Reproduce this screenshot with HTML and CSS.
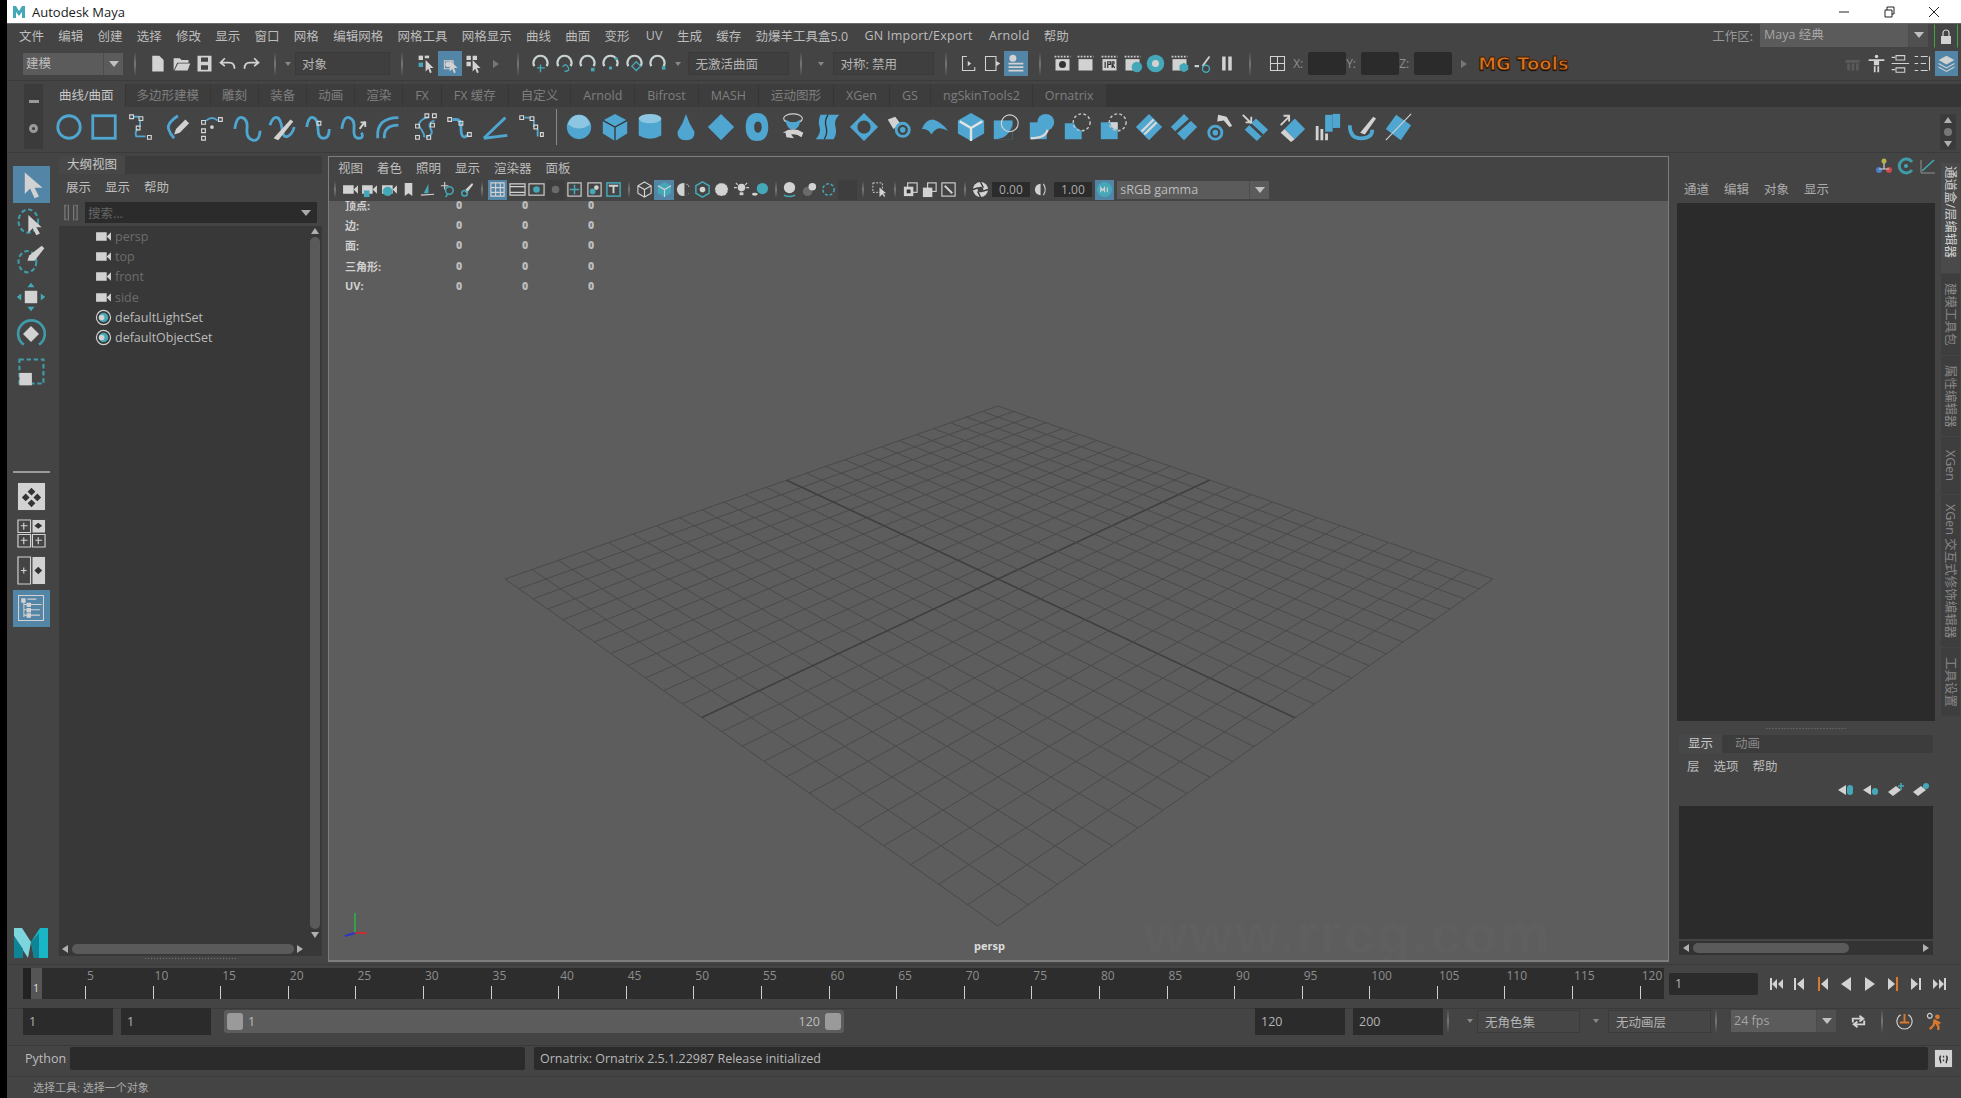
FILE: index.html
```html
<!DOCTYPE html>
<html lang="zh">
<head>
    <meta charset="UTF-8">
    <title>Autodesk Maya</title>
    <link rel="stylesheet" href="styles.css">
</head>
<body>
<svg class="defs">
    <symbol id="cam" viewBox="0 0 16 12"><rect class="fw" x="1" y="2" width="10" height="8"/><path class="fw" d="M11 6l4-4v8z"/></symbol>
    <symbol id="set" viewBox="0 0 18 18"><circle class="sw" cx="9" cy="9" r="7.5"/><circle class="ft" cx="9" cy="9" r="5"/><circle class="fw" cx="7" cy="9" r="3"/></symbol>
    <symbol id="cursor" viewBox="0 0 24 24"><path class="fw" d="M11 8v13l3-3 2 5 2-1-2-5h4z"/></symbol>
</svg>
<div class="app">
    <!-- title bar -->
    <div class="titlebar">
        <svg class="title-logo" viewBox="0 0 14 14"><path class="ft" d="M1 1h3l3 5 3-5h3v12h-3V7l-3 4-3-4v6H1z"/></svg>
        <span>Autodesk Maya</span>
        <div class="win-btns">
            <svg viewBox="0 0 12 12"><path class="sk" d="M1 6h10"/></svg>
            <svg viewBox="0 0 12 12"><path class="sk" d="M2 4h7v7H2zM4 4V1h7v7H9"/></svg>
            <svg viewBox="0 0 12 12"><path class="sk" d="M1 1l10 10M11 1L1 11"/></svg>
        </div>
    </div>

    <!-- main menu -->
    <div class="menubar">
        <span>文件</span><span>编辑</span><span>创建</span><span>选择</span><span>修改</span><span>显示</span><span>窗口</span><span>网格</span><span>编辑网格</span><span>网格工具</span><span>网格显示</span><span>曲线</span><span>曲面</span><span>变形</span><span class="lat">UV</span><span>生成</span><span>缓存</span><span>劲爆羊工具盒5.0</span><span class="lat">GN Import/Export</span><span class="lat">Arnold</span><span>帮助</span>
        <div class="workspace">
            <span>工作区:</span>
            <div class="dd dd-work"><span class="dd-text">Maya 经典</span><span class="dd-caret"></span></div>
            <div class="lock"><svg viewBox="0 0 16 20"><path class="sw" d="M5 9V6a3 3 0 0 1 6 0v3"/><rect class="fw" x="3" y="9" width="10" height="8"/></svg></div>
        </div>
    </div>

    <!-- status line -->
    <div class="statusline">
        <div class="dd dd-mode"><span class="dd-text">建模</span><span class="dd-caret"></span></div>
        <i class="sep"></i>
        <div class="ic"><svg viewBox="0 0 24 24"><path class="fw" d="M6 3h8l5 5v13H6z"/></svg></div>
        <div class="ic"><svg viewBox="0 0 24 24"><path class="fw" d="M3 6h7l2 2h8v3H7l-4 9zM8 12h14l-3 8H4z"/></svg></div>
        <div class="ic"><svg viewBox="0 0 24 24"><path class="fw" d="M4 3h16v18H4zM8 5v5h8V5zM8 14v5h8v-5z"/></svg></div>
        <div class="ic"><svg viewBox="0 0 24 24"><path class="sw2" d="M9 6l-5 5 5 4M5 11h9q6 0 6 7"/></svg></div>
        <div class="ic"><svg viewBox="0 0 24 24"><path class="sw2" d="M15 6l5 5-5 4M19 11h-9q-6 0-6 7"/></svg></div>
        <i class="sep sep-c"></i>
        <span class="mini-caret"></span>
        <div class="box box-mask"><span>对象</span></div>
        <i class="sep sep-b"></i>
        <div class="ic"><svg viewBox="0 0 24 24"><rect class="fw" x="3" y="3" width="5" height="5"/><rect class="ft" x="3" y="11" width="5" height="5"/><rect class="fw" x="10" y="3" width="5" height="3"/><use href="#cursor"/></svg></div>
        <div class="ic on"><svg viewBox="0 0 24 24"><path class="sw" d="M5 9h10v9H5z"/><circle class="fw" cx="9" cy="13" r="3"/><use href="#cursor"/></svg></div>
        <div class="ic"><svg viewBox="0 0 24 24"><path class="fw" d="M4 3h5v5H4zM11 3h5v5h-5zM4 10h5v5H4z"/><use href="#cursor"/></svg></div>
        <span class="tri-r"></span>
        <i class="sep"></i>
        <div class="ic"><svg viewBox="0 0 24 24"><path class="sg" d="M5 15A8 8 0 1 1 19 15"/><path class="st" d="M8 17h9M12 13v9"/></svg></div>
        <div class="ic"><svg viewBox="0 0 24 24"><path class="sg" d="M5 15A8 8 0 1 1 19 15"/><path class="st" d="M10 16q3-5 6 0t-4 5"/></svg></div>
        <div class="ic"><svg viewBox="0 0 24 24"><path class="sg" d="M5 15A8 8 0 1 1 19 15"/><rect class="ft" x="16" y="17" width="4" height="4"/></svg></div>
        <div class="ic"><svg viewBox="0 0 24 24"><path class="sg" d="M5 15A8 8 0 1 1 19 15"/><circle class="ft" cx="12" cy="17" r="2"/><rect class="ft" x="17" y="5" width="3" height="3"/></svg></div>
        <div class="ic"><svg viewBox="0 0 24 24"><path class="sg" d="M5 15A8 8 0 1 1 19 15"/><path class="st" d="M9 15l5-5 5 5-5 5z"/></svg></div>
        <div class="ic"><svg viewBox="0 0 24 24"><path class="sg" d="M5 15A8 8 0 1 1 19 15"/><rect class="ft" x="17" y="15" width="4" height="4"/></svg></div>
        <span class="mini-caret"></span>
        <div class="box box-curve"><span>无激活曲面</span></div>
        <i class="sep"></i>
        <span class="mini-caret"></span>
        <div class="box box-sym"><span>对称: 禁用</span></div>
        <i class="sep"></i>
        <div class="ic"><svg viewBox="0 0 24 24"><path class="sw" d="M9 4H4v16h14v-4"/><path class="fw" d="M10 9l4 3-4 3z"/></svg></div>
        <div class="ic"><svg viewBox="0 0 24 24"><path class="sw" d="M4 4h12v16H4z"/><path class="fw" d="M16 9l5 3-5 3z"/></svg></div>
        <div class="ic on"><svg viewBox="0 0 24 24"><circle class="fw" cx="9" cy="6" r="4"/><path class="sw2" d="M4 12h17M4 16h17M4 20h17"/></svg></div>
        <i class="sep"></i>
        <div class="ic"><svg viewBox="0 0 24 24"><path class="film" d="M3 4h18"/><rect class="fw" x="4" y="7" width="16" height="13"/><circle class="fd" cx="12" cy="13" r="4"/></svg></div>
        <div class="ic"><svg viewBox="0 0 24 24"><path class="film" d="M3 4h18"/><rect class="fw" x="4" y="7" width="16" height="13"/></svg></div>
        <div class="ic"><svg viewBox="0 0 24 24"><path class="film" d="M3 4h18"/><rect class="fw" x="4" y="7" width="16" height="13"/><path class="sd" d="M7 10v7M10 17v-7h3v3h-3M15 17v-7h2q1 3-2 3l3 4"/></svg></div>
        <div class="ic"><svg viewBox="0 0 24 24"><path class="film" d="M3 4h18"/><rect class="fw" x="4" y="7" width="16" height="13"/><circle class="ft" cx="17" cy="16" r="6"/></svg></div>
        <div class="ic"><svg viewBox="0 0 24 24"><circle class="ft" cx="12" cy="12" r="10"/><circle class="fw" cx="12" cy="12" r="4"/></svg></div>
        <div class="ic"><svg viewBox="0 0 24 24"><path class="film" d="M3 4h18"/><rect class="fw" x="4" y="7" width="16" height="13"/><path class="ft" d="M17 11l5 3v5l-5 3-5-3v-5z"/></svg></div>
        <div class="ic"><svg viewBox="0 0 24 24"><path class="sw2" d="M12 15L20 4"/><path class="sg" d="M3 15h5"/><circle class="st" cx="16" cy="18" r="4"/></svg></div>
        <div class="ic"><svg viewBox="0 0 24 24"><path class="fw" d="M7 4h4v16H7zM14 4h4v16h-4z"/></svg></div>
        <i class="sep"></i>
        <div class="ic ic-pick"><svg viewBox="0 0 24 24"><path class="sw" d="M4 4h16v16H4zM12 4v16M4 12h16"/></svg></div>
        <span class="xyz">X:</span><div class="box box-xyz"></div>
        <span class="xyz">Y:</span><div class="box box-xyz"></div>
        <span class="xyz">Z:</span><div class="box box-xyz"></div>
        <span class="tri-r tri-logo"></span>
        <span class="mg-logo">MG Tools</span>
        <div class="status-right">
            <div class="ic dim"><svg viewBox="0 0 24 24"><path class="fg" d="M4 8h16v3H4zM6 12h3v8H6zM11 12h3v8h-3zM16 12h3v8h-3z"/></svg></div>
            <div class="ic"><svg viewBox="0 0 24 24"><circle class="fw" cx="12" cy="4" r="2"/><path class="fw" d="M3 7h18v2h-6v5h-6V9H3zM9 15h2v7H9zM13 15h2v7h-2z"/></svg></div>
            <div class="ic"><svg viewBox="0 0 24 24"><path class="sw" d="M8 3h10v5H8zM3 5h4M3 12h20M8 17h10v5H8zM3 19h4"/></svg></div>
            <div class="ic"><svg viewBox="0 0 24 24"><path class="sw" d="M3 4h4M3 12h4M3 20h4M10 4h8M20 4v16M10 12h6M10 20h8"/></svg></div>
            <div class="ic on"><svg viewBox="0 0 24 24"><path class="fw" d="M12 3l9 5-9 5-9-5z"/><path class="sw" d="M3 12l9 5 9-5M3 16l9 5 9-5"/></svg></div>
        </div>
    </div>

    <!-- shelf -->
    <div class="shelf">
        <div class="shelf-side"><span class="dash"></span><span class="gear"></span></div>
        <div class="shelf-main">
            <div class="shelf-tabs">
                <span class="active">曲线/曲面</span><span>多边形建模</span><span>雕刻</span><span>装备</span><span>动画</span><span>渲染</span><span class="tl">FX</span><span class="tl">FX 缓存</span><span class="tl">自定义</span><span class="tl">Arnold</span><span class="tl">Bifrost</span><span class="tl">MASH</span><span class="tl">运动图形</span><span class="tl">XGen</span><span class="tl">GS</span><span class="tl">ngSkinTools2</span><span class="tl">Ornatrix</span>
            </div>
            <div class="shelf-icons">
                <div class="si"><svg viewBox="0 0 32 32"><circle class="sb" cx="16" cy="16" r="12"/></svg></div>
                <div class="si"><svg viewBox="0 0 32 32"><rect class="sb" x="4" y="4" width="24" height="24"/></svg></div>
                <div class="si"><svg viewBox="0 0 32 32"><path class="sb2" d="M9 5h6M16 8v8M14 18q-4 3-2 8h10"/><path class="pt" d="M5 3h4v4H5zM15 5h4v4h-4zM12 15h4v4h-4zM24 25h4v4h-4z"/></svg></div>
                <div class="si"><svg viewBox="0 0 32 32"><path class="sb" d="M18 4q-12 8-10 14t6 10"/><path class="fw" d="M14 24l2-6 10-10 4 4-10 10z"/></svg></div>
                <div class="si"><svg viewBox="0 0 32 32"><path class="sb2" d="M11 9q6-5 12 0"/><path class="pt" d="M6 9h4v4H6zM24 6h4v4h-4zM6 18h4v4H6zM6 26h4v4H6z"/><circle class="fw" cx="17" cy="16" r="2"/></svg></div>
                <div class="si"><svg viewBox="0 0 32 32"><path class="sb" d="M3 18q2-14 8-12t5 12 6 12 8-10"/></svg></div>
                <div class="si"><svg viewBox="0 0 32 32"><path class="sb" d="M3 14q4-10 8-8t5 12 6 8 7-10"/><path class="fw" d="M7 28l18-20 3 2-16 20z"/></svg></div>
                <div class="si"><svg viewBox="0 0 32 32"><path class="sb" d="M4 16q2-12 7-10t5 12 6 10 6-10"/><path class="pt" d="M15 10h4v4h-4z"/></svg></div>
                <div class="si"><svg viewBox="0 0 32 32"><path class="sb" d="M3 18q2-14 8-12t5 12 5 10 3-6"/><path class="sw2" d="M22 18l6-8M23 11h5v5"/></svg></div>
                <div class="si"><svg viewBox="0 0 32 32"><path class="sb" d="M4 28q-2-22 22-22"/><path class="sb" d="M11 28q-1-14 15-14"/></svg></div>
                <div class="si"><svg viewBox="0 0 32 32"><path class="sb2" d="M20 5q-14 5-9 12t4 10"/><path class="sb2" d="M26 9q-8 3-4 9t-5 9"/><path class="pt" d="M16 2h4v4h-4zM24 2h4v4h-4zM6 13h4v4H6zM22 12h4v4h-4zM6 25h4v4H6zM18 25h4v4h-4z"/></svg></div>
                <div class="si"><svg viewBox="0 0 32 32"><path class="sb" d="M8 8h4q5 0 5 8t2 10 6-2"/><path class="pt" d="M3 6h4v4H3zM15 10h4v4h-4zM24 22h4v4h-4z"/></svg></div>
                <div class="si"><svg viewBox="0 0 32 32"><path class="sb" d="M3 28l25-3"/><path class="sb" d="M3 28L26 6"/></svg></div>
                <div class="si"><svg viewBox="0 0 32 32"><path class="sb2" d="M8 6h6M18 9v7M22 18v8"/><path class="pt" d="M3 4h4v4H3zM14 5h4v4h-4zM18 14h4v4h-4zM25 22h3v4h-3z"/></svg></div>
                <i class="sep sep-shelf"></i>
                <div class="si"><svg viewBox="0 0 32 32"><circle class="fb" cx="16" cy="16" r="13"/><path class="fl" d="M4 13q12 9 24 0-4-10-12-10T4 13z"/></svg></div>
                <div class="si"><svg viewBox="0 0 32 32"><path class="fb" d="M16 2l13 7v14l-13 8-13-8V9z"/><path class="sd" d="M3 9l13 7 13-7M16 16v15"/></svg></div>
                <div class="si"><svg viewBox="0 0 32 32"><path class="fb" d="M4 7h24v18q-12 7-24 0z"/><ellipse class="fl" cx="16" cy="7" rx="12" ry="5"/></svg></div>
                <div class="si"><svg viewBox="0 0 32 32"><path class="fb" d="M16 2q3 10 9 19 1 9-9 9T7 21q6-9 9-19z"/></svg></div>
                <div class="si"><svg viewBox="0 0 32 32"><path class="fb" d="M16 2l14 14-14 14L2 16z"/></svg></div>
                <div class="si"><svg viewBox="0 0 32 32"><path class="fb fe" d="M16 1c9 0 12 7 12 15s-3 15-12 15S4 24 4 16 7 1 16 1zM17 10c-3 0-4 3-4 6s1 6 4 6 4-3 4-6-1-6-4-6z"/></svg></div>
                <div class="si"><svg viewBox="0 0 32 32"><ellipse class="sw" cx="16" cy="7" rx="10" ry="5"/><path class="fb" d="M8 8q8 6 16 0-1 8-5 10h-6q-4-2-5-10z"/><path class="fw" d="M5 22q11-7 22 0l-2 5q-5-4-11-3l3 4-8-1-1-5z"/></svg></div>
                <div class="si"><svg viewBox="0 0 32 32"><path class="fb" d="M8 3h20q-6 6-4 13t-2 13H3q6-7 4-13T8 3z"/><path class="sd" d="M16 3q-4 6-2 13t-2 13"/></svg></div>
                <div class="si"><svg viewBox="0 0 32 32"><path class="fb fe" d="M16 1l15 15-15 15L1 16zM16 9c-4 0-7 3-7 7s3 7 7 7 7-3 7-7-3-7-7-7z"/></svg></div>
                <div class="si"><svg viewBox="0 0 32 32"><path class="fw" d="M4 8l8-3 6 8-8 5z"/><circle class="sb" cx="20" cy="19" r="7"/><circle class="fb" cx="20" cy="19" r="3"/></svg></div>
                <div class="si"><svg viewBox="0 0 32 32"><path class="fb" d="M2 18q4-10 12-10 8 2 16 12-8-4-12-2t-6 6q-2-6-10-6z"/></svg></div>
                <div class="si"><svg viewBox="0 0 32 32"><path class="fb" d="M16 1l14 8v14l-14 8-14-8V9z"/><path class="swb" d="M16 17L4 10M16 17l12-7M16 17v14"/></svg></div>
                <div class="si"><svg viewBox="0 0 32 32"><rect class="fb" x="3" y="9" width="20" height="20"/><path class="fd2" d="M3 29q16 0 20-16v16z"/><circle class="sw" cx="20" cy="12" r="9"/></svg></div>
                <div class="si"><svg viewBox="0 0 32 32"><rect class="fb" x="3" y="11" width="18" height="18"/><circle class="fb" cx="20" cy="11" r="9"/><path class="swd" d="M4 28q16 0 18-9"/></svg></div>
                <div class="si"><svg viewBox="0 0 32 32"><path class="fb" d="M3 12h10q2 6 8 8v9H3z"/><circle class="dash-c" cx="21" cy="11" r="9"/></svg></div>
                <div class="si"><svg viewBox="0 0 32 32"><rect class="fb" x="3" y="11" width="18" height="18"/><path class="fw" d="M13 11h8v8q-7 0-8-8z"/><circle class="dash-c" cx="21" cy="11" r="9"/></svg></div>
                <div class="si"><svg viewBox="0 0 32 32"><path class="fb" d="M16 2l14 14-14 14L2 16z"/><path class="swd" d="M8 21L21 8M11 24L24 11"/></svg></div>
                <div class="si"><svg viewBox="0 0 32 32"><path class="fb" d="M16 2l14 14-14 14L2 16z"/><path class="sbg" d="M5 24L25 6"/></svg></div>
                <div class="si"><svg viewBox="0 0 32 32"><path class="fw" d="M14 3l9 2 6 10-3 1-6-7-7 1z"/><circle class="sb" cx="11" cy="22" r="7"/><circle class="fb" cx="11" cy="22" r="3"/></svg></div>
                <div class="si"><svg viewBox="0 0 32 32"><path class="fb" d="M17 7l13 12-12 12L5 19z"/><path class="sbg" d="M11 13l13 12"/><path class="sw2" d="M3 3l9 9M6 11h6V5"/></svg></div>
                <div class="si"><svg viewBox="0 0 32 32"><path class="fb" d="M20 7l11 11-11 11L9 18z"/><path class="fw" d="M9 18l11 11-4 3L5 22z"/><path class="sw2" d="M5 14L14 5M8 4h6v6"/></svg></div>
                <div class="si"><svg viewBox="0 0 32 32"><rect class="fb" x="14" y="3" width="8" height="18"/><rect class="fb" x="22" y="2" width="8" height="15"/><path class="fw" d="M4 15h3v15H4zM9 18h3v12H9zM14 23h3v7h-3z"/></svg></div>
                <div class="si"><svg viewBox="0 0 32 32"><path class="sb3" d="M3 14q0 14 12 14t12-9"/><path class="fw" d="M14 22l14-17 3 2-12 17z"/></svg></div>
                <div class="si"><svg viewBox="0 0 32 32"><path class="fb" d="M14 3l16 11-11 16L3 18z"/><path class="sw" d="M3 30L30 2"/></svg></div>
            </div>
        </div>
        <div class="shelf-scroll"><span class="tri-u"></span><span class="dot"></span><span class="tri-d"></span></div>
    </div>

    <!-- main area -->
    <div class="main">
        <div class="toolbox">
            <div class="tool on"><svg viewBox="0 0 36 36"><path class="fw" d="M11 4v24l6-6 5 11 5-2-5-10h9z"/></svg></div>
            <div class="tool"><svg viewBox="0 0 36 36"><ellipse class="dash-t" cx="15" cy="17" rx="11" ry="13"/><path class="fw" d="M15 10v20l5-5 4 8 4-2-4-7h6z"/></svg></div>
            <div class="tool"><svg viewBox="0 0 36 36"><ellipse class="dash-t" cx="14" cy="21" rx="10" ry="12"/><path class="fw" d="M14 20l2-6 14-11 3 3-11 14z"/></svg></div>
            <div class="tool"><svg viewBox="0 0 36 36"><rect class="fw" x="11" y="11" width="14" height="14"/><path class="ft" d="M18 2l4 5h-8zM18 34l-4-5h8zM2 18l5-4v8zM34 18l-5 4v-8z"/></svg></div>
            <div class="tool"><svg viewBox="0 0 36 36"><path class="sg3" d="M10 30A15 15 0 1 1 27 30"/><path class="fw" d="M18 9l9 9-9 9-9-9z"/></svg></div>
            <div class="tool"><svg viewBox="0 0 36 36"><rect class="dash-t" x="5" y="4" width="27" height="27"/><rect class="fw" x="5" y="19" width="14" height="14"/></svg></div>
            <i class="tool-line"></i>
            <div class="tool tool-s"><svg viewBox="0 0 30 30"><rect class="fw" x="1" y="1" width="28" height="28"/><path class="fd" d="M15 6l4 4-4 4-4-4zM9 12l4 4-4 4-4-4zM21 12l4 4-4 4-4-4zM15 18l4 4-4 4-4-4z"/></svg></div>
            <div class="tool tool-s"><svg viewBox="0 0 30 30"><path class="sw" d="M1 1h13v13H1zM1 16h13v13H1zM16 16h13v13H16z"/><rect class="fw" x="16" y="1" width="13" height="13"/><path class="fd" d="M22 4l4 3-4 3-4-3z"/><path class="sw" d="M7 4v7M4 7h7M7 19v7M4 22h7M22 19v7M19 22h7"/></svg></div>
            <div class="tool tool-s"><svg viewBox="0 0 30 30"><path class="sw" d="M1 1h13v28H1zM7 12v6M4 15h6"/><rect class="fw" x="16" y="1" width="13" height="28"/><path class="fd" d="M22 11l4 4-4 4-4-4z"/></svg></div>
            <div class="tool on"><svg viewBox="0 0 36 36"><path class="sw" d="M4 4h28v28H4z"/><path class="sw" d="M10 10v18M10 14h4M10 20h4M10 26h4M14 8h10M18 14h12M18 20h10M18 26h10"/><path class="fw" d="M7 7h5v5H7zM13 12h5v5h-5zM13 18h5v5h-5zM13 24h5v5h-5z"/></svg></div>
            <svg class="maya-logo" viewBox="0 0 34 32"><path class="m1" d="M0 2h8l9 14-3 16L0 10z"/><path class="m2" d="M0 10l9 13v9H0z"/><path class="m3" d="M34 2h-8l-9 14 3 16h14z"/><path class="m2" d="M17 16l8-9v25h-5z"/></svg>
        </div>

        <div class="outliner">
            <div class="tabstrip"><span class="tab">大纲视图</span></div>
            <div class="panel-menu out-menu"><span>展示</span><span>显示</span><span>帮助</span></div>
            <div class="out-search">
                <svg class="search-ic" viewBox="0 0 16 20"><path class="sg2" d="M3 2H1v16h2M13 2h2v16h-2M5 1v18M11 1v18"/></svg>
                <div class="search-box"><span>搜索...</span><i class="caret-w"></i></div>
            </div>
            <div class="out-body">
                <div class="out-list">
                    <div class="out-row dim"><svg><use href="#cam"/></svg>persp</div>
                    <div class="out-row dim"><svg><use href="#cam"/></svg>top</div>
                    <div class="out-row dim"><svg><use href="#cam"/></svg>front</div>
                    <div class="out-row dim"><svg><use href="#cam"/></svg>side</div>
                    <div class="out-row"><svg><use href="#set"/></svg>defaultLightSet</div>
                    <div class="out-row"><svg><use href="#set"/></svg>defaultObjectSet</div>
                </div>
                <div class="vscroll"><span class="tri-u"></span><div class="vthumb"></div><span class="tri-d"></span></div>
            </div>
            <div class="hscroll out-h"><span class="tri-l"></span><div class="hthumb"></div><span class="tri-r"></span></div>
            <div class="grip"></div>
        </div>

        <div class="viewport">
            <div class="panel-menu vp-menu"><span>视图</span><span>着色</span><span>照明</span><span>显示</span><span>渲染器</span><span>面板</span></div>
            <div class="vp-bar">
                <i class="sep"></i>
                <div class="vi"><svg viewBox="0 0 18 18"><use href="#cam"/></svg></div>
                <div class="vi"><svg viewBox="0 0 18 18"><use href="#cam"/><rect class="ft" x="3" y="10" width="6" height="7"/></svg></div>
                <div class="vi"><svg viewBox="0 0 18 18"><use href="#cam"/><circle class="ft" cx="7" cy="11" r="5"/></svg></div>
                <div class="vi"><svg viewBox="0 0 18 18"><path class="fw" d="M5 2h8v14l-4-3-4 3z"/></svg></div>
                <div class="vi"><svg viewBox="0 0 18 18"><path class="ft" d="M10 3v10H5z"/><path class="sw" d="M2 15l14-1"/></svg></div>
                <div class="vi"><svg viewBox="0 0 18 18"><path class="sw" d="M6 1v8M2 5h8"/><circle class="st" cx="11" cy="10" r="4"/><path class="st" d="M9 14l-2 3"/></svg></div>
                <div class="vi"><svg viewBox="0 0 18 18"><path class="fw" d="M7 10l8-8 1 2-7 9z"/><circle class="st" cx="7" cy="13" r="3"/></svg></div>
                <i class="sep"></i>
                <div class="vi on"><svg viewBox="0 0 18 18"><path class="sw" d="M2 2h14v14H2zM7 2v14M12 2v14M2 7h14M2 12h14"/></svg></div>
                <div class="vi"><svg viewBox="0 0 18 18"><path class="sw" d="M1 3h16v12H1zM1 6h16M1 12h16"/></svg></div>
                <div class="vi"><svg viewBox="0 0 18 18"><rect class="sw" x="1" y="3" width="16" height="12"/><circle class="ft" cx="9" cy="9" r="3.5"/></svg></div>
                <div class="vi vi-off"><svg viewBox="0 0 18 18"><circle class="fg" cx="9" cy="9" r="4"/></svg></div>
                <div class="vi"><svg viewBox="0 0 18 18"><rect class="sw" x="2" y="2" width="14" height="14"/><path class="st" d="M9 4v10M4 9h10"/></svg></div>
                <div class="vi"><svg viewBox="0 0 18 18"><rect class="sw" x="2" y="2" width="14" height="14"/><circle class="ft" cx="7" cy="11" r="3"/><circle class="fw" cx="11" cy="7" r="2.5"/></svg></div>
                <div class="vi"><svg viewBox="0 0 18 18"><rect class="st" x="2" y="2" width="14" height="14"/><path class="sw2" d="M5 6V5h8v1M9 5v8"/></svg></div>
                <i class="sep"></i>
                <div class="vi"><svg viewBox="0 0 18 18"><path class="sw" d="M9 1l7 4v8l-7 4-7-4V5zM2 5l7 4 7-4M9 9v8"/></svg></div>
                <div class="vi on"><svg viewBox="0 0 18 18"><path class="ft" d="M9 1l7 4v8l-7 4-7-4V5z"/><path class="sw" d="M2 5l7 4 7-4M9 9v8"/></svg></div>
                <div class="vi"><svg viewBox="0 0 18 18"><circle class="fw" cx="9" cy="9" r="7"/><path class="fd2" d="M10 2h2v2h2v2h2v2h1v3h-1v2h-2v2h-2v2h-2z"/></svg></div>
                <div class="vi"><svg viewBox="0 0 18 18"><path class="st" d="M9 1l7 4v8l-7 4-7-4V5z"/><circle class="fw" cx="9" cy="9" r="3"/></svg></div>
                <div class="vi"><svg viewBox="0 0 18 18"><circle class="chk" cx="9" cy="9" r="7"/></svg></div>
                <div class="vi"><svg viewBox="0 0 18 18"><circle class="fw" cx="9" cy="7" r="4"/><rect class="fw" x="7" y="12" width="4" height="3"/><path class="sw" d="M1 7h3M14 7h3M3 2l2 2M15 2l-2 2"/></svg></div>
                <div class="vi"><svg viewBox="0 0 18 18"><circle class="ft" cx="11" cy="8" r="6"/><ellipse class="fw" cx="3" cy="14" rx="3" ry="1.5"/></svg></div>
                <i class="sep sep-tight"></i>
                <div class="vi"><svg viewBox="0 0 18 18"><circle class="fw" cx="9" cy="7" r="6"/><path class="st" d="M3 15q6 3 12 0"/></svg></div>
                <div class="vi"><svg viewBox="0 0 18 18"><circle class="fg" cx="7" cy="11" r="5"/><circle class="fw" cx="12" cy="6" r="4"/></svg></div>
                <div class="vi"><svg viewBox="0 0 18 18"><circle class="dash-s" cx="9" cy="9" r="6"/></svg></div>
                <div class="vi vi-off"></div>
                <i class="sep"></i>
                <div class="vi"><svg viewBox="0 0 18 18"><rect class="dash-w" x="2" y="2" width="10" height="10"/><path class="fw" d="M9 7v10l3-3 2 3 1-1-2-3h3z"/></svg></div>
                <i class="sep"></i>
                <div class="vi"><svg viewBox="0 0 18 18"><rect class="sw" x="6" y="2" width="10" height="10"/><rect class="fw" x="2" y="6" width="10" height="10"/><rect class="fd" x="5" y="9" width="4" height="4"/></svg></div>
                <div class="vi"><svg viewBox="0 0 18 18"><rect class="sw" x="7" y="2" width="9" height="9"/><rect class="fw" x="2" y="7" width="10" height="10"/></svg></div>
                <div class="vi"><svg viewBox="0 0 18 18"><rect class="sw" x="2" y="2" width="14" height="14"/><path class="sw2" d="M5 5l8 8"/></svg></div>
                <i class="sep"></i>
                <div class="vi"><svg viewBox="0 0 18 18"><circle class="fw" cx="9" cy="9" r="8"/><circle class="fd2" cx="9" cy="9" r="3"/><path class="sd" d="M9 1l3 6M17 9l-6 2M9 17l-3-6M1 9l6-2"/></svg></div>
                <div class="vi-num vi-gain">0.00</div>
                <div class="vi vi-narrow"><svg viewBox="0 0 18 18"><path class="fw" d="M8 3a6 6 0 0 0 0 12z"/><path class="sw" d="M11 3q4 6 0 12"/></svg></div>
                <div class="vi-num">1.00</div>
                <div class="vi on vi-cm"><svg viewBox="0 0 18 18"><circle class="ft" cx="9" cy="9" r="8"/><path class="sw" d="M5 12V7l2 3 2-3v5M12 7v5"/></svg></div>
                <div class="dd dd-gamma"><span class="dd-text">sRGB gamma</span><span class="dd-caret"></span></div>
            </div>
            <div class="vp-canvas">
                <svg id="grid" class="grid"></svg>
                <div class="hud">
                    <span>顶点:</span><b>0</b><b>0</b><b>0</b>
                    <span>边:</span><b>0</b><b>0</b><b>0</b>
                    <span>面:</span><b>0</b><b>0</b><b>0</b>
                    <span>三角形:</span><b>0</b><b>0</b><b>0</b>
                    <span>UV:</span><b>0</b><b>0</b><b>0</b>
                </div>
                <svg class="axis" viewBox="0 0 32 34"><path class="ax-g" d="M14 24V4"/><path class="ax-r" d="M14 24h12"/><path class="ax-b" d="M14 24l-10 3"/></svg>
                <span class="persp">persp</span>
                <span class="watermark">www.rrcg.com</span>
            </div>
        </div>

        <div class="side">
            <div class="chan">
                <div class="chan-icons">
                    <svg viewBox="0 0 18 18"><circle class="m-b" cx="4" cy="13" r="3"/><circle class="m-r" cx="14" cy="13" r="3"/><circle class="m-y" cx="9" cy="4" r="2.5"/><path class="sw" d="M9 6v6H4M9 12h5"/></svg>
                    <svg viewBox="0 0 18 18"><path class="sg3" d="M15 13A7 7 0 1 1 15 5"/><circle class="ft" cx="9" cy="9" r="2"/></svg>
                    <svg viewBox="0 0 18 18"><path class="sg2" d="M2 16h14M2 16V3"/><path class="st" d="M3 14L15 3"/></svg>
                </div>
                <div class="panel-menu chan-menu"><span>通道</span><span>编辑</span><span>对象</span><span>显示</span></div>
                <div class="chan-box"></div>
                <div class="grip grip-wide"></div>
            </div>
            <div class="layers">
                <div class="tabstrip layer-tabs"><span class="tab">显示</span><span class="tab tab-off">动画</span></div>
                <div class="panel-menu layer-menu"><span>层</span><span>选项</span><span>帮助</span></div>
                <div class="layer-icons">
                    <svg viewBox="0 0 18 14"><path class="fw" d="M1 7l8-5v10z"/><rect class="ft" x="10" y="2" width="6" height="10" rx="3"/></svg>
                    <svg viewBox="0 0 18 14"><path class="fw" d="M1 7l8-5v10z"/><rect class="ft" x="10" y="5" width="6" height="7" rx="3"/></svg>
                    <svg viewBox="0 0 18 14"><path class="fw" d="M1 9l8-6 5 4-8 6z"/><path class="st" d="M14 0v7M11 3h6"/></svg>
                    <svg viewBox="0 0 18 14"><path class="fw" d="M1 9l8-6 5 4-8 6z"/><circle class="ft" cx="14" cy="3" r="3"/></svg>
                </div>
                <div class="layer-box"></div>
                <div class="hscroll layer-h"><span class="tri-l"></span><div class="hthumb"></div><span class="tri-r"></span></div>
            </div>
        </div>

        <div class="side-tabs">
            <span class="vtab vtab-on">通道盒/层编辑器</span>
            <span class="vtab">建模工具包</span>
            <span class="vtab">属性编辑器</span>
            <span class="vtab vtab-x">XGen</span>
            <span class="vtab">XGen 交互式修饰编辑器</span>
            <span class="vtab">工具设置</span>
        </div>
    </div>

    <!-- time slider -->
    <div class="timeline">
        <div class="track">
            <div class="track-start"></div>
            <div class="track-cur">1</div>
            <div class="track-pad"></div>
            <div class="tk"><span>5</span><i></i></div><div class="tk"><span>10</span><i></i></div><div class="tk"><span>15</span><i></i></div><div class="tk"><span>20</span><i></i></div><div class="tk"><span>25</span><i></i></div><div class="tk"><span>30</span><i></i></div><div class="tk"><span>35</span><i></i></div><div class="tk"><span>40</span><i></i></div><div class="tk"><span>45</span><i></i></div><div class="tk"><span>50</span><i></i></div><div class="tk"><span>55</span><i></i></div><div class="tk"><span>60</span><i></i></div><div class="tk"><span>65</span><i></i></div><div class="tk"><span>70</span><i></i></div><div class="tk"><span>75</span><i></i></div><div class="tk"><span>80</span><i></i></div><div class="tk"><span>85</span><i></i></div><div class="tk"><span>90</span><i></i></div><div class="tk"><span>95</span><i></i></div><div class="tk"><span>100</span><i></i></div><div class="tk"><span>105</span><i></i></div><div class="tk"><span>110</span><i></i></div><div class="tk"><span>115</span><i></i></div><div class="tk"><span>120</span><i></i></div>
        </div>
        <div class="box box-frame"><span>1</span></div>
        <div class="play">
            <svg viewBox="0 0 16 16"><path class="fw" d="M2 2h2v12H2zM9 3v10L4 8zM15 3v10l-5-5z"/></svg>
            <svg viewBox="0 0 16 16"><path class="fw" d="M3 2h2v12H3zM13 2v12L6 8z"/></svg>
            <svg viewBox="0 0 16 16"><path class="fo" d="M3 1h2v14H3z"/><path class="fw" d="M13 2v12L6 8z"/></svg>
            <svg viewBox="0 0 16 16"><path class="fw" d="M13 1v14L3 8z"/></svg>
            <svg viewBox="0 0 16 16"><path class="fw" d="M3 1v14l10-7z"/></svg>
            <svg viewBox="0 0 16 16"><path class="fo" d="M11 1h2v14h-2z"/><path class="fw" d="M3 2v12l7-6z"/></svg>
            <svg viewBox="0 0 16 16"><path class="fw" d="M11 2h2v12h-2zM3 2v12l7-6z"/></svg>
            <svg viewBox="0 0 16 16"><path class="fw" d="M12 2h2v12h-2zM1 3v10l5-5zM7 3v10l5-5z"/></svg>
        </div>
    </div>

    <!-- range slider -->
    <div class="range">
        <div class="box box-num"><span>1</span></div>
        <div class="box box-num box-num2"><span>1</span></div>
        <div class="slider">
            <i class="handle"></i><span class="sl-a">1</span><span class="sl-b">120</span><i class="handle"></i>
        </div>
        <div class="box box-num box-end"><span>120</span></div>
        <div class="box box-num box-num2"><span>200</span></div>
        <i class="sep sep-r"></i>
        <span class="mini-caret"></span>
        <div class="box box-set"><span>无角色集</span></div>
        <span class="mini-caret mini-b"></span>
        <div class="box box-set"><span>无动画层</span></div>
        <i class="sep sep-r"></i>
        <div class="dd dd-fps"><span class="dd-text">24 fps</span><span class="dd-caret"></span></div>
        <svg class="rg-ic rg-loop" viewBox="0 0 20 20"><path class="sw2" d="M4 11V7h10M11 4l4 3-4 3M16 9v4H6M9 16l-4-3 4-3"/></svg>
        <i class="sep sep-r sep-i"></i>
        <svg class="rg-ic" viewBox="0 0 20 20"><path class="sw" d="M6 3a8 8 0 1 0 8 0"/><path class="fo" d="M9 2h2v9H9zM5 10h10v2H5z"/></svg>
        <svg class="rg-ic rg-run" viewBox="0 0 20 20"><circle class="sw" cx="4" cy="4" r="2.5"/><circle class="fo" cx="12" cy="5" r="2.5"/><path class="sor" d="M4 18l4-4 1-5 6 3M9 9l4 6v4"/></svg>
    </div>

    <!-- command line -->
    <div class="cmd">
        <span class="cmd-label">Python</span>
        <div class="box box-cmd"></div>
        <div class="box box-result"><span>Ornatrix: Ornatrix 2.5.1.22987 Release initialized</span></div>
        <svg class="cmd-ic" viewBox="0 0 20 20"><rect class="fw" x="1" y="1" width="18" height="18"/><path class="sd" d="M7 7q-2 3 0 6v2M13 7q2 3 0 6v2M10 7v2M10 11v2"/></svg>
    </div>
    <div class="helpline">选择工具: 选择一个对象</div>
</div>
<script src="script.js"></script>
</body>
</html>
```

FILE: styles.css
```css
* {
    box-sizing: border-box;
}
html, body {
    margin: 0;
    height: 100%;
    overflow: hidden;
    background: #000;
}
body {
    font-family: "Open Sans", "Noto Sans CJK SC", sans-serif;
    font-size: 12.5px;
    color: #bdbdbd;
}
.defs {
    position: absolute;
    width: 0;
    height: 0;
}
.app {
    height: 1098px;
    margin-left: 7px;
    width: 1954px;
    display: flex;
    flex-direction: column;
    background: #444;
}
svg {
    display: block;
    flex: none;
}
i {
    display: block;
    flex: none;
}

/* svg paint classes */
.fw { fill: #d2d2d2; }
.fb { fill: #4fa6d0; }
.fl { fill: #8cc6e2; }
.ft { fill: #45a8b8; }
.fg { fill: #6a6a6a; }
.fd { fill: #333; }
.fd2 { fill: #444; }
.fo { fill: #d8792e; }
.fe { fill-rule: evenodd; }
.sk { fill: none; stroke: #222; stroke-width: 1; }
.sw { fill: none; stroke: #d2d2d2; stroke-width: 1.2; }
.sw2 { fill: none; stroke: #d2d2d2; stroke-width: 2; }
.swb { fill: none; stroke: #e4e4e4; stroke-width: 2.5; }
.swd { fill: none; stroke: #d8d8d8; stroke-width: 2.5; }
.sd { fill: none; stroke: #333; stroke-width: 1.4; }
.sg { fill: none; stroke: #c8d4d4; stroke-width: 2.5; }
.sg2 { fill: none; stroke: #777; stroke-width: 1.5; }
.sg3 { fill: none; stroke: #3f9ba8; stroke-width: 3; }
.st { fill: none; stroke: #45a8b8; stroke-width: 1.6; }
.sb { fill: none; stroke: #4fa6d0; stroke-width: 3; }
.sb2 { fill: none; stroke: #4fa6d0; stroke-width: 2; }
.sb3 { fill: none; stroke: #4fa6d0; stroke-width: 4; }
.sbg { fill: none; stroke: #444; stroke-width: 3; }
.pt { fill: none; stroke: #d8d8d8; stroke-width: 1.2; }
.chk { fill: #d2d2d2; stroke: #555; stroke-width: 1; stroke-dasharray: 2 2; }
.sor { fill: none; stroke: #d8792e; stroke-width: 2.4; }
.dash-c { fill: none; stroke: #c8c8c8; stroke-width: 1.5; stroke-dasharray: 3 2.5; }
.dash-t { fill: none; stroke: #3f9ba8; stroke-width: 2.4; stroke-dasharray: 5 3; }
.dash-s { fill: none; stroke: #45a8b8; stroke-width: 1.6; stroke-dasharray: 3 2; }
.dash-w { fill: none; stroke: #d2d2d2; stroke-width: 1; stroke-dasharray: 2 1.5; }
.film { fill: none; stroke: #d2d2d2; stroke-width: 2; stroke-dasharray: 2 1.5; }
.m1 { fill: #7fd5dd; }
.m2 { fill: #0f8496; }
.m3 { fill: #19b7c6; }
.m-b { fill: #4d7dc4; }
.m-r { fill: #c94a4a; }
.m-y { fill: #b8b04a; }

/* title bar */
.titlebar {
    height: 23px;
    flex: none;
    background: #fff;
    color: #1a1a1a;
    display: flex;
    align-items: center;
    padding-left: 5px;
    font-family: "Open Sans", sans-serif;
    font-size: 13px;
}
.title-logo {
    width: 14px;
    height: 14px;
    margin-right: 6px;
}
.win-btns {
    margin-left: auto;
    display: flex;
    gap: 33px;
    padding-right: 21px;
}
.win-btns svg {
    width: 12px;
    height: 12px;
}

/* menu bar */
.menubar {
    height: 24px;
    flex: none;
    display: flex;
    align-items: center;
    gap: 14.25px;
    padding-left: 12px;
    border-top: 1px solid #6a6a6a;
}
.lat {
    letter-spacing: .25px;
    margin-left: 2px;
}
.workspace {
    margin-left: auto;
    display: flex;
    align-items: center;
    gap: 7px;
    padding-right: 3px;
    color: #999;
}
.dd {
    display: flex;
    align-items: stretch;
    background: #5b5b5b;
    color: #bdbdbd;
    height: 22px;
    flex: none;
}
.dd-text {
    flex: 1;
    padding-left: 3px;
    line-height: 21px;
}
.dd-caret {
    width: 20px;
    border-left: 1px solid #4c4c4c;
    position: relative;
}
.dd-caret::after {
    content: "";
    position: absolute;
    left: 5px;
    top: 8px;
    border: 5px solid transparent;
    border-top: 6px solid #c0c0c0;
    border-bottom: 0;
}
.dd-mode {
    width: 100px;
}
.dd-work {
    width: 168px;
    height: 23px;
    color: #a6a6a6;
    padding-left: 1px;
}
.dd-work .dd-caret {
    background: #505050;
}
.lock {
    width: 24px;
    height: 24px;
    border: 1px solid #3fa53f;
    border-top-color: #444;
    border-bottom-color: #444;
    margin-left: -1px;
    padding: 2px 3px;
}

/* status line */
.statusline {
    height: 33px;
    flex: none;
    display: flex;
    align-items: center;
    padding-left: 16px;
}
.sep {
    width: 2px;
    height: 24px;
    margin: 0 10px 0 11px;
    background: linear-gradient(#444, #777 50%, #444);
}
.sep-b {
    margin-right: 12px;
}
.sep-c {
    margin-right: 3px;
}
.ic {
    width: 23.4px;
    height: 25px;
    display: flex;
    align-items: center;
    justify-content: center;
    flex: none;
}
.ic svg {
    width: 21px;
    height: 21px;
}
.ic.on {
    background: #5285a6;
}
.ic.dim {
    opacity: .6;
}
.ic-pick {
    margin: 0 4px 0 5px;
}
.mini-caret {
    width: 0;
    height: 0;
    flex: none;
    margin: 0 4px 0 6px;
    border: 3px solid transparent;
    border-top: 4px solid #888;
    border-bottom: 0;
}
.tri-r, .tri-l, .tri-u, .tri-d {
    display: block;
    width: 0;
    height: 0;
    flex: none;
    border: 4px solid transparent;
}
.tri-r {
    border-left: 6px solid #b0b0b0;
    border-right: 0;
}
.tri-l {
    border-right: 6px solid #b0b0b0;
    border-left: 0;
}
.tri-u {
    border-bottom: 6px solid #b0b0b0;
    border-top: 0;
}
.tri-d {
    border-top: 6px solid #b0b0b0;
    border-bottom: 0;
}
.statusline > .tri-r {
    margin: 0 7px 0 8px;
    border-left-color: #777;
}
.box {
    background: #2b2b2b;
    display: flex;
    align-items: center;
    padding-left: 6px;
    height: 23px;
    flex: none;
    color: #b4b4b4;
}
.box-mask, .box-curve, .box-sym {
    background: #3f3f3f;
    border: 1px solid #3a3a3a;
}
.box-mask {
    width: 95px;
}
.box-curve {
    width: 101px;
    margin-left: 3px;
}
.box-sym {
    width: 101px;
    margin-left: 5px;
}
.xyz {
    width: 15px;
    color: #8f8f8f;
    flex: none;
    font-size: 12px;
}
.box-xyz {
    width: 38px;
    border-radius: 2px;
}
.statusline > .tri-logo {
    margin: 0 11px 0 9px;
}
.mg-logo {
    font-family: "DejaVu Sans", sans-serif;
    font-weight: bold;
    font-size: 18px;
    color: #d9761f;
    -webkit-text-stroke: 1px #4a1e05;
    text-shadow: 0 1px 1px #000;
    white-space: nowrap;
}
.status-right {
    margin-left: auto;
    display: flex;
    padding-right: 3px;
}

/* shelf */
.shelf {
    height: 72px;
    flex: none;
    display: flex;
    padding: 3px 0;
    border-top: 1px solid #3a3a3a;
}
.shelf-side {
    width: 19px;
    margin-left: 17px;
    background: #3b3b3b;
    display: flex;
    flex-direction: column;
    align-items: center;
    justify-content: space-around;
    padding: 6px 0;
}
.dash {
    width: 10px;
    height: 3px;
    background: #999;
}
.gear {
    width: 9px;
    height: 9px;
    border: 3px solid #999;
    border-radius: 50%;
}
.shelf-main {
    flex: 1;
    min-width: 0;
    margin-left: 5px;
}
.shelf-tabs {
    height: 23px;
    background: #363636;
    display: flex;
    gap: 1px;
    margin-right: -24px;
}
.shelf-tabs span {
    padding: 0 11px;
    line-height: 23px;
    background: #3d3d3d;
    color: #7f7f7f;
    white-space: nowrap;
}
.shelf-tabs .tl {
    padding: 0 12px;
}
.shelf-tabs .active {
    background: #444;
    color: #c8c8c8;
}
.shelf-icons {
    height: 40px;
    display: flex;
    align-items: center;
    padding-left: 3px;
}
.si {
    width: 35.6px;
    display: flex;
    justify-content: center;
    flex: none;
}
.si svg {
    width: 30px;
    height: 30px;
}
.sep-shelf {
    height: 36px;
    margin: 0 4px 0 7px;
    background: #888;
    width: 1px;
}
.shelf-scroll {
    width: 16px;
    margin: 30px 5px 0 0;
    height: 36px;
    background: #3b3b3b;
    display: flex;
    flex-direction: column;
    align-items: center;
    justify-content: space-between;
    padding: 3px 0;
}
.dot {
    width: 8px;
    height: 8px;
    border-radius: 50%;
    background: #777;
}

/* main area */
.main {
    flex: 1;
    min-height: 0;
    display: flex;
    padding-top: 3px;
    border-top: 1px solid #3a3a3a;
}
.toolbox {
    width: 48px;
    flex: none;
    display: flex;
    flex-direction: column;
    align-items: center;
    padding: 10px 0 0 0;
}
.tool {
    width: 37px;
    height: 37.4px;
    display: flex;
    align-items: center;
    justify-content: center;
    flex: none;
}
.tool svg {
    width: 32px;
    height: 32px;
}
.tool.on {
    background: #5285a6;
}
.tool-s svg {
    width: 29px;
    height: 29px;
}
.tool-line {
    width: 37px;
    height: 2px;
    margin: 81px 0 4px;
    background: #9a9a9a;
}
.maya-logo {
    width: 34px;
    height: 32px;
    margin-top: auto;
    margin-bottom: 6px;
}
.panel-menu {
    display: flex;
    align-items: center;
    flex: none;
}
.tabstrip {
    height: 18px;
    flex: none;
    background: #3c3c3c;
    display: flex;
}
.tab {
    padding: 0 8px;
    background: #474747;
    line-height: 17px;
    color: #c8c8c8;
}
.tab-off {
    background: #3c3c3c;
    color: #8a8a8a;
    margin-left: 4px;
}
.outliner {
    width: 263px;
    margin-left: 4px;
    flex: none;
    display: flex;
    flex-direction: column;
    margin-bottom: 3px;
}
.out-menu {
    height: 25px;
    gap: 14px;
    padding-left: 7px;
}
.out-search {
    height: 27px;
    flex: none;
    display: flex;
    align-items: center;
    padding-left: 5px;
    gap: 7px;
}
.search-ic {
    width: 14px;
    height: 19px;
}
.search-box {
    width: 232px;
    height: 21px;
    background: #2b2b2b;
    display: flex;
    align-items: center;
    justify-content: space-between;
    padding: 0 6px 0 3px;
    color: #666;
}
.caret-w {
    border: 5px solid transparent;
    border-top: 6px solid #aaa;
    border-bottom: 0;
}
.out-body {
    flex: 1;
    min-height: 0;
    display: flex;
    background: #383838;
}
.out-list {
    flex: 1;
    padding-left: 36px;
}
.out-row {
    height: 20.3px;
    display: flex;
    align-items: center;
    color: #bcbcbc;
    gap: 2px;
}
.out-row svg {
    width: 17px;
    height: 17px;
    margin-right: 1px;
}
.out-row.dim {
    color: #6c6c6c;
}
.vscroll {
    width: 13px;
    padding-right: 2px;
    display: flex;
    flex-direction: column;
    align-items: center;
    gap: 3px;
    padding-top: 2px;
    padding-bottom: 4px;
    background: #383838;
}
.vthumb {
    flex: 1;
    width: 10px;
    background: #5a5a5a;
    border-radius: 5px;
}
.hscroll {
    height: 14px;
    flex: none;
    display: flex;
    align-items: center;
    background: #383838;
}
.hthumb {
    height: 10px;
    background: #5a5a5a;
    border-radius: 5px;
}
.out-h {
    padding-left: 3px;
}
.out-h .hthumb {
    width: 222px;
    margin: 0 3px 0 4px;
}
.grip {
    height: 5px;
    flex: none;
    background: radial-gradient(circle, #777 .5px, transparent 1px) center / 3px 3px repeat-x;
    margin: 0 85px;
}

/* viewport */
.viewport {
    width: 1341px;
    margin-left: 6px;
    flex: none;
    display: flex;
    flex-direction: column;
    border: 1px solid #7d7d7d;
    border-bottom-width: 2px;
    margin-bottom: 2px;
}
.vp-menu {
    height: 21px;
    gap: 14px;
    padding-left: 9px;
}
.vp-bar {
    height: 23px;
    flex: none;
    display: flex;
    align-items: center;
}
.vp-bar .sep {
    height: 17px;
    margin: 0 5px;
}
.vp-bar .sep-tight {
    margin-right: 3px;
}
.vi {
    width: 19.3px;
    height: 20px;
    display: flex;
    align-items: center;
    justify-content: center;
    flex: none;
}
.vi svg {
    width: 17px;
    height: 17px;
}
.vi.on {
    background: #5285a6;
}
.vi-off {
    background: #3e3e3e;
}
.vi-narrow {
    width: 24px;
}
.vi-num {
    width: 38px;
    height: 15px;
    line-height: 15px;
    background: #2b2b2b;
    text-align: center;
    flex: none;
    font-size: 12px;
    color: #aaa;
}
.vi-gain {
    margin-left: 2px;
}
.vi-cm {
    margin-left: 3px;
}
.dd-gamma {
    width: 152px;
    height: 18px;
    margin-left: 3px;
}
.dd-gamma .dd-text {
    line-height: 18px;
}
.dd-gamma .dd-caret::after {
    top: 6px;
}
.vp-canvas {
    flex: 1;
    min-height: 0;
    position: relative;
    overflow: hidden;
    background: #5d5d5d;
}
.grid {
    position: absolute;
    left: 0;
    top: 0;
    width: 100%;
    height: 100%;
}
.grid-line {
    stroke: #4a4a4a;
    stroke-width: 1;
}
.grid-axis {
    stroke: #3f3f3f;
    stroke-width: 1.6;
}
.hud {
    position: absolute;
    left: 16px;
    top: -6px;
    display: grid;
    grid-template-columns: 111px 66px 66px 10px;
    grid-auto-rows: 20.2px;
    align-items: center;
    font-size: 11px;
    font-weight: bold;
    color: #d0d0d0;
}
.hud b {
    color: #bdbdbd;
    font-size: 10.5px;
    text-align: left;
}
.axis {
    position: absolute;
    left: 12px;
    bottom: 17px;
    width: 32px;
    height: 34px;
}
.ax-g { fill: none; stroke: #34a04a; stroke-width: 2; }
.ax-r { fill: none; stroke: #c23030; stroke-width: 2; }
.ax-b { fill: none; stroke: #2a35c8; stroke-width: 2; }
.persp {
    position: absolute;
    left: 645px;
    bottom: 7px;
    font-size: 11px;
    font-weight: bold;
    color: #dcdcdc;
}
.watermark {
    position: absolute;
    left: 815px;
    bottom: -6px;
    font-family: "Liberation Sans", sans-serif;
    font-size: 56px;
    letter-spacing: 2px;
    font-weight: bold;
    color: #5f5f5f;
}

/* channel box and layers */
.side {
    width: 262px;
    margin-left: 6px;
    flex: none;
    display: flex;
    flex-direction: column;
    margin-bottom: 5px;
}
.chan {
    flex: 1;
    min-height: 0;
    display: flex;
    flex-direction: column;
}
.chan-icons {
    height: 20px;
    flex: none;
    display: flex;
    justify-content: flex-end;
    align-items: center;
    gap: 4px;
}
.chan-icons svg {
    width: 18px;
    height: 18px;
}
.chan-menu {
    height: 27px;
    gap: 15px;
    padding: 0 0 2px 9px;
    color: #aaa;
}
.chan-box {
    flex: 1;
    min-height: 0;
    background: #2b2b2b;
    margin: 0 2px;
}
.grip-wide {
    height: 14px;
    margin: 0 90px;
}
.layers {
    height: 224px;
    flex: none;
    display: flex;
    flex-direction: column;
}
.layer-tabs {
    margin: 0 4px;
}
.layer-tabs .tab {
    padding: 0 9px;
}
.layer-menu {
    height: 25px;
    gap: 14px;
    padding-left: 12px;
}
.layer-icons {
    height: 28px;
    flex: none;
    display: flex;
    justify-content: flex-end;
    align-items: center;
    gap: 7px;
    padding: 0 7px 4px 0;
}
.layer-icons svg {
    width: 18px;
    height: 14px;
}
.layer-box {
    flex: 1;
    min-height: 0;
    background: #2b2b2b;
    margin: 0 4px;
}
.layer-h {
    margin: 2px 4px 4px;
    padding: 0 4px;
    background: #333;
}
.layer-h .hthumb {
    width: 156px;
    margin: 0 auto 0 4px;
}

/* side tabs */
.side-tabs {
    width: 19px;
    margin-left: 4px;
    flex: none;
    display: flex;
    flex-direction: column;
    padding-top: 7px;
    gap: 1px;
}
.vtab {
    writing-mode: vertical-rl;
    text-orientation: sideways;
    background: #3e3e3e;
    color: #888;
    padding: 9px 0;
    line-height: 19px;
    white-space: nowrap;
}
.vtab-on {
    background: #4a4a4a;
    color: #d0d0d0;
    padding: 3px 0 15px;
}
.vtab-x {
    padding: 13px 0;
}

/* time slider */
.timeline {
    height: 44px;
    flex: none;
    display: flex;
    align-items: center;
    padding-left: 16px;
    padding-bottom: 6px;
    border-top: 1px solid #3a3a3a;
}
.track {
    width: 1641px;
    height: 31px;
    background: #2d2d2d;
    display: flex;
    overflow: hidden;
    flex: none;
}
.track-start {
    width: 8px;
    background: #222;
    flex: none;
}
.track-cur {
    width: 11px;
    background: #555;
    flex: none;
    color: #ddd;
    padding: 12px 0 0 2px;
    font-size: 11px;
}
.track-pad {
    width: 43px;
    flex: none;
}
.tk {
    width: 67.6px;
    flex: none;
    display: flex;
    flex-direction: column;
    justify-content: space-between;
}
.tk span {
    padding-left: 2px;
    color: #8d8d8d;
    font-size: 12px;
    line-height: 16px;
}
.tk i {
    width: 1px;
    height: 13px;
    background: #cfcfcf;
}
.box-frame {
    width: 89px;
    height: 22px;
    margin-left: 5px;
    border-radius: 2px;
}
.play {
    display: flex;
    padding-left: 10px;
    gap: 7.4px;
}
.play svg {
    width: 16px;
    height: 16px;
}

/* range slider row */
.range {
    height: 38px;
    flex: none;
    display: flex;
    align-items: center;
    padding-left: 16px;
    padding-bottom: 12px;
    border-top: 1px solid #3a3a3a;
    border-bottom: 1px solid #3a3a3a;
}
.box-num {
    width: 90px;
    height: 27px;
}
.box-num2 {
    margin-left: 8px;
}
.slider {
    width: 620px;
    height: 23px;
    margin-left: 13px;
    background: #5c5c5c;
    border-radius: 3px;
    display: flex;
    align-items: center;
    padding: 0 3px;
    color: #bdbdbd;
    flex: none;
}
.handle {
    width: 16px;
    height: 17px;
    background: #9a9a9a;
    border-radius: 3px;
}
.sl-a {
    margin-left: 5px;
    flex: 1;
}
.sl-b {
    margin-right: 5px;
}
.box-end {
    margin-left: 411px;
}
.sep-r {
    margin: 0 12px 0 4px;
}
.sep-i {
    margin: 0 6px 0 4px;
}
.box-set {
    width: 103px;
    background: #464646;
    border: 1px solid #3b3b3b;
    padding-left: 7px;
}
.mini-b {
    margin-left: 13px;
    margin-right: 9px;
}
.dd-fps {
    width: 105px;
    height: 22px;
    margin-left: 2px;
    color: #a4a4a4;
}
.dd-fps .dd-caret {
    background: #505050;
}
.rg-ic {
    width: 19px;
    height: 19px;
    margin-left: 6px;
}
.rg-loop {
    margin-left: 13px;
    margin-right: 9px;
}
.rg-run {
    margin-left: 12px;
}

/* command line */
.cmd {
    height: 30px;
    flex: none;
    display: flex;
    align-items: center;
    padding: 0 0 6px 18px;
}
.cmd-label {
    width: 45px;
    flex: none;
}
.box-cmd {
    width: 455px;
    height: 23px;
    border-radius: 2px;
}
.box-result {
    width: 1394px;
    height: 23px;
    margin-left: 9px;
    border-radius: 2px;
    color: #b8b8b8;
}
.cmd-ic {
    width: 19px;
    height: 19px;
    margin-left: 6px;
}
.helpline {
    height: 22px;
    flex: none;
    padding-left: 26px;
    font-size: 11px;
    line-height: 22px;
    color: #aaa;
    border-top: 1px solid #3a3a3a;
}
```

FILE: script.js
```js
// perspective grid: 24 x 24 cells on a plane given by its four corners (page coords)
const corners = [[505, 579], [998, 406], [1493, 579], [998, 926]];
const CELLS = 24;

function makeProjection(p) {
    const [x0, y0] = p[0], [x1, y1] = p[1], [x2, y2] = p[2], [x3, y3] = p[3];
    const dx1 = x1 - x2, dx2 = x3 - x2, sx = x0 - x1 + x2 - x3;
    const dy1 = y1 - y2, dy2 = y3 - y2, sy = y0 - y1 + y2 - y3;
    const den = dx1 * dy2 - dx2 * dy1;
    const g = (sx * dy2 - dx2 * sy) / den;
    const h = (dx1 * sy - sx * dy1) / den;
    const a = x1 - x0 + g * x1, b = x3 - x0 + h * x3;
    const d = y1 - y0 + g * y1, e = y3 - y0 + h * y3;
    return (u, v) => {
        const w = g * u + h * v + 1;
        return [(a * u + b * v + x0) / w, (d * u + e * v + y0) / w];
    };
}

function drawGrid() {
    const svg = document.getElementById('grid');
    const box = svg.getBoundingClientRect();
    const project = makeProjection(corners);
    let html = '';
    const addLine = (a, b, cls) => {
        html += `<line class="${cls}" x1="${a[0] - box.left}" y1="${a[1] - box.top}" x2="${b[0] - box.left}" y2="${b[1] - box.top}"/>`;
    };
    for (let i = 0; i <= CELLS; i++) {
        const t = i / CELLS;
        const cls = i === CELLS / 2 ? 'grid-axis' : 'grid-line';
        addLine(project(t, 0), project(t, 1), cls);
        addLine(project(0, t), project(1, t), cls);
    }
    svg.innerHTML = html;
}

drawGrid();
```
